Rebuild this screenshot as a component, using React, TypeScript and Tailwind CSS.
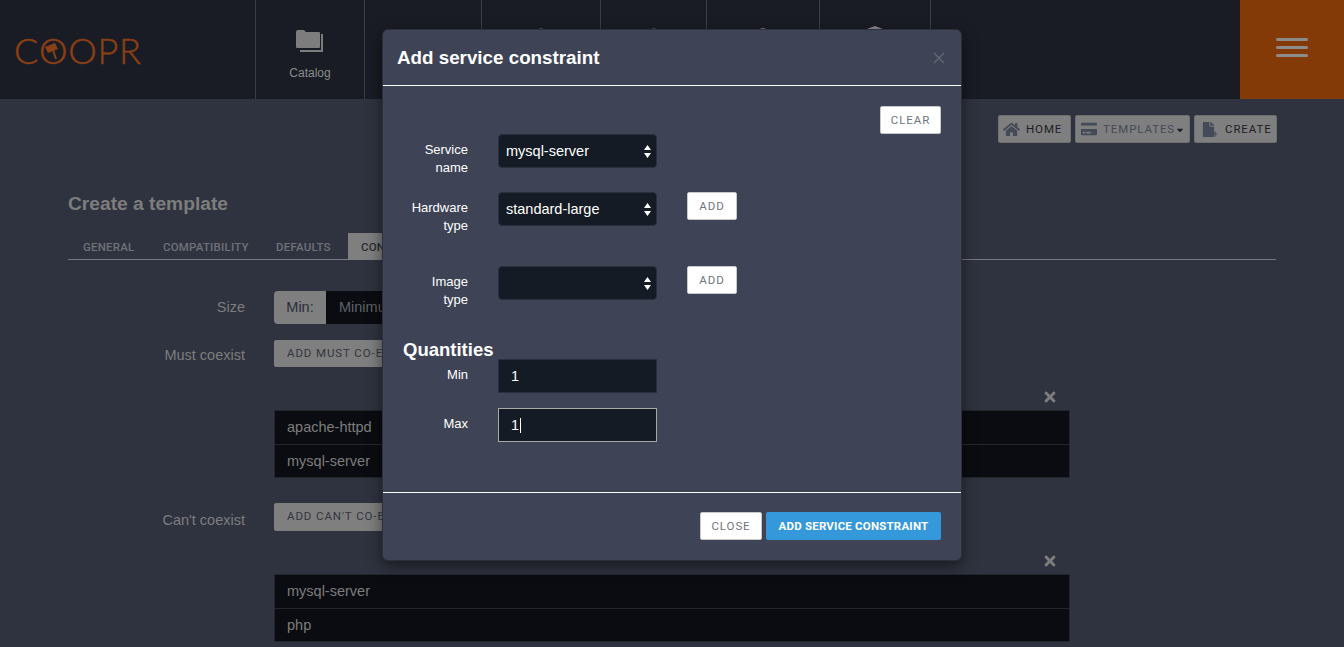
import type { ReactNode } from "react"
import { FaHome, FaTimes, FaCaretDown, FaCreditCard, FaFile, FaPlus, FaCube, FaCog } from "react-icons/fa"

const btnFont = "font-['Roboto',sans-serif]"

function Folder() {
  return (
    <svg width="28" height="23" viewBox="0 0 28 23" className="text-[#7d7d7d]">
      <path d="M0 3 Q0 1 2 1 H8 L10 3 H23 Q24 3 24 4 V18 Q24 19 23 19 H1 Q0 19 0 18 Z" fill="currentColor" />
      <path d="M25 5 H27 V23 H4 V21 H25 Z" fill="currentColor" />
    </svg>
  )
}

function NavItem({ width, children, label }: { width: string; children: ReactNode; label?: string }) {
  return (
    <div className={`${width} h-[99px] border-l border-[#3a3d46] flex flex-col items-center pt-[29px] text-[#8a8a8a]`}>
      {children}
      {label && <span className="mt-[12px] text-[12px] font-medium">{label}</span>}
    </div>
  )
}

function TopButton({ icon, children, w }: { icon: ReactNode; children: ReactNode; w: string }) {
  return (
    <button className={`${w} ${btnFont} h-[28px] bg-[#7f7f7f] border border-[#6f6f6f] rounded-[2px] flex items-center text-[11.5px] tracking-[0.9px] text-[#1e2028]`}>
      {icon}
      <span className="pt-[1px]">{children}</span>
    </button>
  )
}

function ListRows({ items }: { items: string[] }) {
  return (
    <div className="border border-[#23262f] bg-[#0a0c11]">
      {items.map((item, i) => (
        <div key={item} className={`h-[33px] flex items-center pl-[12px] text-[14.5px] text-[#7d7d7d] ${i > 0 ? "border-t border-[#23262f] pt-[1px]" : ""}`}>
          {item}
        </div>
      ))}
    </div>
  )
}

function SelectArrows() {
  return (
    <svg width="7" height="13" viewBox="0 0 7 13" className="text-white">
      <path d="M3.5 0 L7 5 H0 Z M0 8 H7 L3.5 13 Z" fill="currentColor" />
    </svg>
  )
}

function FakeSelect({ value }: { value?: string }) {
  return (
    <div className="w-[159px] h-[34px] bg-[#151b24] border border-[#2a3040] rounded-[4px] flex items-center justify-between pl-[7px] pr-[5px] text-[14.5px] text-white">
      <span className="pt-[1px]">{value}</span>
      <SelectArrows />
    </div>
  )
}

function WhiteButton({ children, w }: { children: ReactNode; w: string }) {
  return (
    <button className={`${w} ${btnFont} h-[28px] pt-[1px] bg-white border border-[#c8c8c8] rounded-[2px] text-[11.5px] tracking-[0.9px] text-[#70747e]`}>
      {children}
    </button>
  )
}

function ModalLabel({ children }: { children: ReactNode }) {
  return <div className="w-[70px] pt-[7px] text-right text-[13px] leading-[18px] font-medium text-white">{children}</div>
}

export default function App() {
  return (
    <div className="relative h-[647px] overflow-hidden bg-[#2f333f] font-['Liberation_Sans',Arial,sans-serif]">
      <header className="h-[99px] bg-[#191c25] flex">
        <div className="w-[255px] flex items-center pl-[14px]">
          <div className="flex items-center text-[36px] leading-none font-['Lato',sans-serif] font-light [-webkit-text-stroke:0.5px_#8a3f14] text-[#8a3f14] tracking-[0.7px]">
            <span>C</span>
            <span className="relative">
              O
              <svg width="18" height="18" viewBox="0 0 18 18" className="absolute left-[5px] top-[10px]">
                <path d="M1 5 L11 1 L14 7 L4 11 Z" fill="#8a3f14" />
                <path d="M9 8 L12 17" stroke="#8a3f14" strokeWidth="2" />
              </svg>
            </span>
            <span>O</span>
            <span>P</span>
            <span>R</span>
          </div>
        </div>
        <NavItem width="w-[109px]" label="Catalog"><Folder /></NavItem>
        <NavItem width="w-[117px]"><span /></NavItem>
        <NavItem width="w-[119px]"><FaCube size={22} className="-mt-[1px] text-[#55585f]" /></NavItem>
        <NavItem width="w-[106px]"><FaCube size={22} className="-mt-[1px] text-[#55585f]" /></NavItem>
        <NavItem width="w-[113px]"><FaCog size={22} className="-mt-[1px]" /></NavItem>
        <NavItem width="w-[111px]"><FaCube size={22} className="-mt-[3px]" /></NavItem>
        <div className="h-[99px] border-l border-[#3a3d46] flex-1" />
        <div className="w-[104px] h-[99px] bg-[#843a06] flex flex-col items-center gap-[5px] pt-[38px]">
          <span className="w-[32px] h-[3px] rounded-full bg-[#8c8c8c]" />
          <span className="w-[32px] h-[3px] rounded-full bg-[#8c8c8c]" />
          <span className="w-[32px] h-[3px] rounded-full bg-[#8c8c8c]" />
        </div>
      </header>

      <div className="pt-[16px] pr-[67px] flex justify-end gap-[4px]">
        <TopButton w="w-[73px]" icon={<FaHome size={17} className="ml-[4px] mr-[6px] text-[#454a58]" />}>HOME</TopButton>
        <TopButton w="w-[115px]" icon={<FaCreditCard size={16} className="ml-[5px] mr-[6px] text-[#454a58]" />}>
          <span className="flex items-center text-[#454a58]">TEMPLATES<FaCaretDown size={10} className="text-[#1e2028]" /></span>
        </TopButton>
        <TopButton w="w-[83px]" icon={
          <span className="relative ml-[6px] mr-[9px]">
            <FaFile size={15} className="text-[#454a58]" />
            <FaPlus size={6} className="absolute -right-[2px] bottom-0 text-[#454a58]" />
          </span>
        }>CREATE</TopButton>
      </div>

      <main className="mx-[68px] mt-[49px]">
        <h1 className="text-[19.2px] leading-[24px] font-bold text-[#7d7d7d]">Create a template</h1>
        <nav className={`${btnFont} mt-[17px] h-[27px] border-b border-[#77797f] flex text-[11.5px] tracking-[0.2px] text-[#6f7178] font-medium`}>
          <span className="ml-[15px] w-[80px] pt-[6px]">GENERAL</span>
          <span className="w-[113px] pt-[6px]">COMPATIBILITY</span>
          <span className="w-[72px] pt-[6px]">DEFAULTS</span>
          <span className="w-[120px] h-[27px] bg-[#7f7f7f] pt-[6px] pl-[13px] text-[#2b2d35]">CONSTRAINTS</span>
        </nav>

        <div className="mt-[31px] flex items-center">
          <div className="w-[177px] text-right text-[14.5px] text-[#7d7d7d] font-medium">Size</div>
          <div className="ml-[29px] w-[400px] h-[33px] flex">
            <div className="w-[52px] bg-[#7f7f7f] rounded-l-[4px] flex items-center justify-center text-[14.5px] text-[#2b2d35]">Min:</div>
            <div className="flex-1 bg-[#0a0c11] flex items-center pl-[13px] text-[14.5px] text-[#5f6268]">Minimum</div>
          </div>
        </div>
        <div className="mt-[16px] h-[27px] flex items-start">
          <div className="w-[177px] pt-[5px] text-right text-[14.5px] text-[#7d7d7d] font-medium">Must coexist</div>
          <button className={`${btnFont} ml-[29px] h-[27px] w-[180px] bg-[#7f7f7f] rounded-[2px] text-left pl-[13px] text-[11.5px] tracking-[0.9px] text-[#33353d]`}>ADD MUST CO-EXIST</button>
        </div>
        <div className="mt-[24px] ml-[206px] w-[796px]">
          <div className="h-[19px] flex justify-end pr-[12px] text-[#7d7d7d]"><FaTimes size={16} className="-mt-[2px]" /></div>
          <ListRows items={["apache-httpd", "mysql-server"]} />
        </div>
        <div className="mt-[25px] h-[28px] flex items-start">
          <div className="w-[177px] pt-[7px] text-right text-[14.5px] text-[#7d7d7d] font-medium">Can't coexist</div>
          <button className={`${btnFont} ml-[29px] h-[28px] w-[180px] bg-[#7f7f7f] rounded-[2px] text-left pl-[13px] text-[11.5px] tracking-[0.9px] text-[#33353d]`}>ADD CAN'T CO-EXIST</button>
        </div>
        <div className="mt-[24px] ml-[206px] w-[796px]">
          <div className="h-[19px] flex justify-end pr-[12px] text-[#7d7d7d]"><FaTimes size={16} className="-mt-[2px]" /></div>
          <ListRows items={["mysql-server", "php"]} />
        </div>
      </main>

      {/* modal sits on top of the page */}
      <div className="absolute left-[382px] top-[29px] w-[580px] h-[532px] bg-[#3e4356] rounded-[6px] border border-[#2d303c] shadow-[0_5px_15px_rgba(0,0,0,0.5)] flex flex-col">
        <div className="h-[56px] border-b border-white flex items-center justify-between pl-[14px] pr-[16px] pt-[2px] shrink-0">
          <h2 className="text-[18.8px] font-bold text-white">Add service constraint</h2>
          <svg width="12" height="12" viewBox="0 0 12 12" className="-mt-[2px] text-[#666a76]">
            <path d="M1 1 L11 11 M11 1 L1 11" stroke="currentColor" strokeWidth="1.2" />
          </svg>
        </div>
        <div className="h-[406px] shrink-0">
          <div className="flex justify-end pr-[20px] pt-[20px]"><WhiteButton w="w-[61px]">CLEAR</WhiteButton></div>
          <div className="ml-[15px]">
            <div className="h-[34px] flex gap-[30px] items-start">
              <ModalLabel>Service<br />name</ModalLabel>
              <FakeSelect value="mysql-server" />
            </div>
            <div className="h-[34px] mt-[24px] flex gap-[30px] items-start">
              <ModalLabel>Hardware<br />type</ModalLabel>
              <FakeSelect value="standard-large" />
              <WhiteButton w="w-[50px]">ADD</WhiteButton>
            </div>
            <div className="h-[34px] mt-[40px] flex gap-[30px] items-start">
              <ModalLabel>Image<br />type</ModalLabel>
              <FakeSelect />
              <WhiteButton w="w-[50px]">ADD</WhiteButton>
            </div>
            <div className="mt-[39px] ml-[5px] text-[18.5px] leading-[22px] font-bold text-white">Quantities</div>
            <div className="flex gap-[30px] items-start -mt-[2px]">
              <ModalLabel>Min</ModalLabel>
              <div className="w-[159px] h-[34px] bg-[#151b24] border border-[#2a3040] flex items-center pl-[12px] pt-[1px] text-[14.5px] text-white">1</div>
            </div>
            <div className="mt-[15px] flex gap-[30px] items-start">
              <ModalLabel>Max</ModalLabel>
              <div className="w-[159px] h-[34px] bg-[#151b24] border border-[#a8a8a8] flex items-center pl-[12px] pt-[1px] text-[14.5px] text-white">
                1<span className="ml-[1px] w-px h-[15px] bg-white" />
              </div>
            </div>
          </div>
        </div>
        <div className="border-t border-white flex-1 flex justify-end items-start gap-[4px] pt-[19px] pr-[20px]">
          <WhiteButton w="w-[62px]">CLOSE</WhiteButton>
          <button className={`${btnFont} w-[175px] h-[28px] pt-[1px] bg-[#3498db] rounded-[2px] text-[11.5px] font-bold tracking-[0.2px] text-white`}>ADD SERVICE CONSTRAINT</button>
        </div>
      </div>
    </div>
  )
}
